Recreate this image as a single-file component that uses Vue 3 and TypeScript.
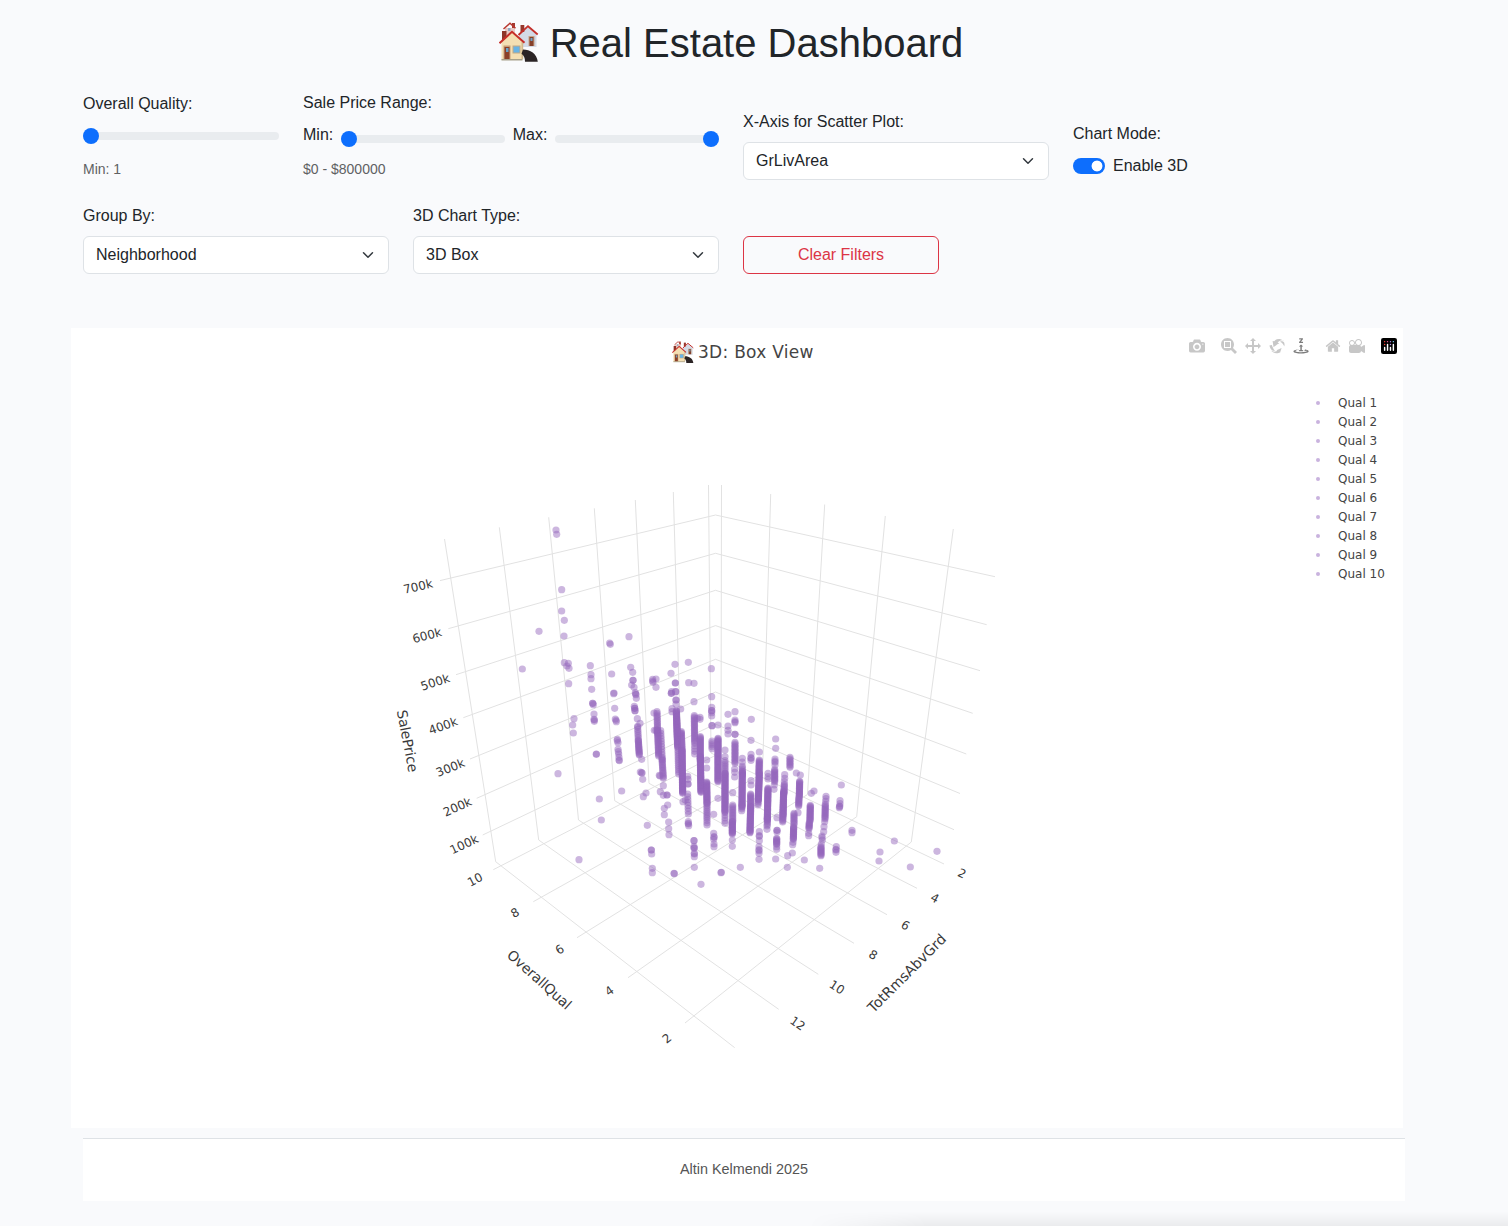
<script setup lang="ts">
import { ref, computed } from 'vue'

type Line = number[]
type Run = [number, number, number, number, number]
interface Label { t: string; x: number; y: number; r: number; w?: number; s?: number }
interface Icon { name: string; d: string; w: number; gap: boolean; active?: boolean }

const quality = ref(1)
const minPrice = ref(0)
const maxPrice = ref(800000)
const xAxis = ref('GrLivArea')
const enable3d = ref(true)
const groupBy = ref('Neighborhood')
const chartType = ref('3D Box')

function clearFilters(): void {
  quality.value = 1
  minPrice.value = 0
  maxPrice.value = 800000
}

const legend = Array.from({ length: 10 }, (_, i) => `Qual ${i + 1}`)

// Price levels: left wall, corner, right wall
const grid: Line[] = [
  [440, 580.6, 715.5, 515, 995, 576.7],
  [448.3, 628.7, 715.5, 553.3, 986.7, 624.7],
  [456, 674.7, 715.5, 590.3, 980, 670.7],
  [463.3, 717.7, 715.5, 625.6, 972.7, 713.3],
  [470, 759, 715.5, 659.3, 966.3, 754],
  [476.7, 798.3, 715.5, 692, 960, 793.5],
  [482.7, 835, 715.5, 724, 954, 829.7],
  // Rooms: left wall down, then across the floor
  [444.5, 539, 495.7, 861.7, 734.7, 1047.7],
  [499.3, 527.3, 538.7, 840, 778.7, 1009.3],
  [548.7, 517.3, 578.5, 820, 818.3, 974.3],
  [594.3, 508.3, 614.7, 800.7, 854, 943.3],
  [635.3, 500, 649, 783.3, 887, 914.7],
  [673.3, 492, 681.3, 768, 917, 888.3],
  [708.5, 485, 711, 753, 944, 864],
  // Quality: right wall down, then across the floor
  [721.5, 485, 721, 752.5, 493.3, 869.7],
  [770.7, 494, 762.5, 773.5, 533.3, 901.7],
  [824.7, 504.5, 807.5, 794.5, 577, 937.7],
  [885.3, 516, 856.7, 816.7, 628, 977.7],
  [953.3, 529, 911.3, 842, 685, 1023],
]

const labels: Label[] = [
  { t: '700k', x: 418, y: 586.3, r: -13 },
  { t: '600k', x: 427, y: 635.3, r: -15 },
  { t: '500k', x: 435, y: 682, r: -18 },
  { t: '400k', x: 443, y: 725.7, r: -20 },
  { t: '300k', x: 450.3, y: 767.5, r: -22 },
  { t: '200k', x: 457.3, y: 806.7, r: -24 },
  { t: '100k', x: 464, y: 844.3, r: -25 },
  { t: '10', x: 475, y: 879.5, r: -28 },
  { t: '8', x: 515, y: 912.5, r: -30 },
  { t: '6', x: 559.5, y: 949.2, r: -33 },
  { t: '4', x: 609.3, y: 990.7, r: -36 },
  { t: '2', x: 666.7, y: 1038.3, r: -39 },
  { t: '2', x: 962, y: 873.2, r: 26 },
  { t: '4', x: 935, y: 898, r: 28 },
  { t: '6', x: 905.5, y: 925.2, r: 30 },
  { t: '8', x: 873.3, y: 954.8, r: 31 },
  { t: '10', x: 837, y: 987, r: 33 },
  { t: '12', x: 797.7, y: 1023.3, r: 35 },
  { t: 'SalePrice', x: 407.7, y: 741, r: 79, w: 63, s: 14 },
  { t: 'OverallQual', x: 539.5, y: 979.5, r: 42, w: 81, s: 14 },
  { t: 'TotRmsAbvGrd', x: 906.7, y: 973, r: -45, w: 104, s: 14.2 },
]

// Isolated houses, three units per pixel, relative to each group's origin
const singles: { ox: number; oy: number; p: number[][] }[] = [
  { ox: 390, oy: 480, p: [
    [498, 150], [500, 163], [515, 329], [515, 393], [523, 421], [522, 468], [447, 454], [397, 567],
    [523, 548], [535, 550], [531, 558], [537, 565], [536, 611], [552, 716], [548, 735], [550, 759],
    [601, 557], [603, 584], [603, 596], [605, 628], [608, 670], [608, 670], [610, 674], [612, 702],
    [613, 720], [612, 718], [613, 724], [717, 470],
  ] },
  { ox: 390, oy: 750, p: [[619, 13], [619, 12], [504, 71], [628, 147], [634, 210], [567, 329]] },
  { ox: 600, oy: 640, p: [
    [29, 9], [31, 13], [35, 102], [42, 159], [41, 161], [44, 205], [46, 237], [49, 245], [48, 241],
    [52, 298], [54, 308], [52, 302], [54, 328], [56, 342], [55, 335], [58, 362], [57, 360], [57, 352],
    [92, 82], [98, 97], [99, 121], [99, 121], [95, 135], [102, 142], [106, 158], [108, 164], [109, 175], [107, 162],
    [104, 205], [104, 205], [105, 212], [105, 212], [103, 199], [112, 236], [120, 250], [113, 259],
    [125, 358], [125, 398], [126, 399], [121, 396], [128, 418], [138, 459], [130, 470], [65, 453], [142, 556],
    [158, 118], [159, 127], [168, 117], [158, 123], [168, 142], [162, 219], [163, 271], [168, 271], [178, 406], [180, 408],
    [190, 437], [181, 455], [190, 466], [201, 465], [201, 465], [203, 495], [193, 505], [193, 524], [206, 546], [206, 566], [207, 584],
    [154, 630], [154, 630], [155, 642], [157, 685], [157, 698], [222, 700], [223, 701],
    [225, 73], [213, 100], [226, 129], [226, 129], [214, 160], [214, 160], [215, 155], [227, 155], [227, 155], [228, 180], [228, 180], [228, 192],
    [216, 206], [216, 215], [242, 207], [265, 67], [266, 128], [282, 130], [282, 185], [241, 280],
    [249, 485], [256, 480], [263, 409], [264, 418], [264, 432], [264, 432], [265, 550], [265, 552], [266, 557], [265, 545],
    [282, 602], [282, 602], [282, 620], [282, 624], [283, 624], [283, 640], [283, 642], [283, 650], [283, 682], [303, 733],
    [292, 235], [300, 232], [300, 238], [320, 360], [320, 384], [341, 523], [341, 580], [342, 590], [342, 592], [341, 598], [342, 612], [342, 620],
    [334, 86], [335, 170], [335, 202], [335, 212], [335, 212], [335, 218], [335, 228], [336, 257], [336, 257], [354, 255],
    [354, 475], [375, 330], [375, 350], [398, 458], [397, 600], [397, 619], [384, 223], [384, 258], [384, 271], [384, 282],
    [405, 215], [405, 240], [405, 245], [405, 248], [405, 283], [405, 283], [404, 387], [404, 397], [404, 411], [363, 698],
  ] },
  { ox: 700, oy: 690, p: [
    [154, 88], [153, 151], [178, 186], [153, 193], [153, 203], [153, 205], [153, 211], [153, 272], [153, 285],
    [127, 205], [127, 216], [204, 250], [204, 260], [204, 267], [201, 408], [201, 418],
    [178, 425], [178, 437], [178, 439], [178, 452], [177, 470], [177, 479], [177, 482], [177, 490], [177, 508],
    [227, 147], [227, 175], [225, 207], [225, 213], [225, 217], [225, 225], [223, 285], [222, 298],
    [231, 383], [231, 421], [231, 421], [231, 426], [230, 470], [230, 478], [227, 507], [262, 532], [263, 497], [277, 489],
    [254, 254], [254, 265], [253, 275], [289, 249], [301, 255], [294, 368], [279, 457], [278, 464],
    [334, 310], [342, 303], [326, 430], [326, 437], [378, 319], [378, 326], [377, 334], [374, 395], [372, 410], [371, 425],
    [366, 438], [366, 443], [367, 450], [364, 462], [424, 285], [420, 332], [420, 341], [419, 348], [419, 350], [418, 353],
    [456, 421], [456, 428], [409, 470], [408, 478], [408, 480], [408, 487], [313, 510], [359, 535], [64, 547], [121, 532],
  ] },
  { ox: 690, oy: 800, p: [[613, 123], [570, 156], [567, 183], [661, 201], [741, 154]] },
]

// Crowded columns: x0, y0, x1, y1 and how many houses stand between
const runs: { ox: number; oy: number; p: Run[] }[] = [
  { ox: 600, oy: 640, p: [
    [113, 262, 115, 300, 7], [115, 302, 118, 345, 14],
    [171, 215, 173, 280, 14], [173, 270, 176, 348, 22], [182, 272, 187, 360, 12], [186, 355, 190, 415, 14],
    [229, 212, 233, 320, 50], [234, 325, 236, 402, 13], [244, 275, 246, 330, 16], [246, 330, 248, 460, 60],
    [263, 462, 265, 522, 8], [283, 227, 284, 305, 20], [284, 310, 284, 342, 5],
    [301, 290, 301, 360, 24], [301, 350, 303, 457, 48], [320, 426, 321, 490, 26], [321, 492, 321, 530, 8], [321, 535, 321, 555, 4],
    [336, 303, 336, 326, 5], [354, 295, 354, 425, 50], [375, 362, 375, 400, 8], [375, 400, 375, 518, 50], [375, 526, 375, 550, 4],
    [398, 495, 398, 545, 12], [397, 545, 397, 582, 18], [405, 307, 405, 370, 16],
  ] },
  { ox: 700, oy: 690, p: [
    [127, 228, 127, 255, 6], [127, 245, 126, 350, 40], [126, 345, 125, 362, 4],
    [152, 312, 152, 350, 12], [152, 350, 150, 428, 35], [178, 210, 177, 250, 14], [178, 250, 175, 330, 36], [175, 325, 174, 345, 5],
    [204, 294, 202, 390, 40], [202, 385, 202, 404, 5], [224, 239, 224, 275, 12], [230, 445, 230, 463, 8],
    [253, 283, 252, 310, 8], [251, 305, 249, 375, 34], [249, 375, 248, 396, 7], [270, 202, 270, 232, 8],
    [299, 274, 298, 318, 18], [297, 322, 296, 348, 9], [282, 370, 282, 403, 9], [281, 410, 280, 448, 16],
    [331, 346, 330, 393, 18], [328, 398, 327, 416, 7], [376, 343, 375, 387, 13], [363, 470, 363, 497, 10],
  ] },
]

const dots = computed<number[][]>(() => {
  const out: number[][] = []
  for (const g of runs) {
    for (const [x0, y0, x1, y1, n] of g.p) {
      for (let i = 0; i < n; i++) {
        const f = i / (n - 1)
        out.push([g.ox + (x0 + (x1 - x0) * f) / 3, g.oy + (y0 + (y1 - y0) * f) / 3])
      }
    }
  }
  for (const g of singles) for (const [x, y] of g.p) out.push([g.ox + x / 3, g.oy + y / 3])
  return out
})

const icons: Icon[] = [
  { name: 'Download plot as a png', w: 1000, gap: false, d: 'm500 450c-83 0-150-67-150-150 0-83 67-150 150-150 83 0 150 67 150 150 0 83-67 150-150 150z m400 150h-120c-16 0-34 13-39 29l-31 93c-6 15-23 28-40 28h-340c-16 0-34-13-39-28l-31-94c-6-15-23-28-40-28h-120c-55 0-100-45-100-100v-450c0-55 45-100 100-100h800c55 0 100 45 100 100v450c0 55-45 100-100 100z m-400-550c-138 0-250 112-250 250 0 138 112 250 250 250 138 0 250-112 250-250 0-138-112-250-250-250z m365 380c-19 0-35 16-35 35 0 19 16 35 35 35 19 0 35-16 35-35 0-19-16-35-35-35z' },
  { name: 'Zoom', w: 1000, gap: true, d: 'm1000-25l-250 251c40 63 63 138 63 218 0 224-182 406-407 406-224 0-406-182-406-406s183-406 407-406c80 0 155 22 218 62l250-250 125 125z m-812 250l0 438 437 0 0-438-437 0z m62 375l313 0 0-312-313 0 0 312z' },
  { name: 'Pan', w: 1000, gap: false, d: 'm1000 350l-187 188 0-125-250 0 0 250 125 0-188 187-187-187 125 0 0-250-250 0 0 125-188-188 186-187 0 125 252 0 0-250-125 0 187-188 188 188-125 0 0 250 250 0 0-126 187 188z' },
  { name: 'Orbital rotation', w: 1000, gap: false, d: 'm922 660c-5 4-9 7-14 11-359 263-580-31-580-31l-102 28 58-400c0 1 1 1 2 2 118 108 351 249 351 249s-62 27-100 42c88 83 222 183 347 122 16-8 30-17 44-27-2 1-4 2-6 4z m36-329c0 0 64 229-88 296-62 27-124 14-175-11 157-78 225-208 249-266 8-19 11-31 11-31 2 5 6 15 11 32-5-13-8-20-8-20z m-775-239c70-31 117-50 198-32-121 80-199 346-199 346l-96-15-58-12c0 0 55-226 155-287z m603 133l-317-139c0 0 4-4 19-14 7-5 24-15 24-15s-177-147-389 4c235-287 536-112 536-112l31-22 100 299-4-1z m-298-153c6-4 14-9 24-15 0 0-17 10-24 15z' },
  { name: 'Turntable rotation', w: 1000, gap: false, active: true, d: 'm833 5l-17 108v41l-130-65 130-66c0 0 0 38 0 39 0-1 36-14 39-25 4-15-6-22-16-30-15-12-39-16-56-20-90-22-187-23-279-23-261 0-341 34-353 59 3 60 228 110 228 110-140-8-351-35-351-116 0-120 293-142 474-142 155 0 477 22 477 142 0 50-74 79-163 96z m-374 94c-58-5-99-21-99-40 0-24 65-43 144-43 79 0 143 19 143 43 0 19-42 34-98 40v216h87l-132 135-133-135h88v-216z m167 515h-136v1c16 16 31 34 46 52l84 109v54h-230v-71h124v-1c-16-17-28-32-44-51l-89-114v-51h245v72z' },
  { name: 'Reset camera to default', w: 928.6, gap: true, d: 'm786 296v-267q0-15-11-26t-25-10h-214v214h-143v-214h-214q-15 0-25 10t-11 26v267q0 1 0 2t0 2l321 264 321-264q1-1 1-4z m124 39l-34-41q-5-5-12-6h-2q-7 0-12 3l-386 322-386-322q-7-4-13-4-7 2-12 7l-35 41q-4 5-3 13t6 12l401 334q18 15 42 15t43-15l136-114v109q0 8 5 13t13 5h107q8 0 13-5t5-13v-227l122-102q5-5 6-12t-4-13z' },
  { name: 'Reset camera to last save', w: 1000, gap: false, d: 'm938 413l-188-125c0 37-17 71-44 94 64 38 107 107 107 187 0 121-98 219-219 219-121 0-219-98-219-219 0-61 25-117 66-156h-115c30 33 49 76 49 125 0 103-84 187-187 187s-188-84-188-187c0-57 26-107 65-141-38-22-65-62-65-109v-250c0-70 56-126 125-126h500c69 0 125 56 125 126l188-126c34 0 62 28 62 63v375c0 35-28 63-62 63z m-750 0c-69 0-125 56-125 125s56 125 125 125 125-56 125-125-56-125-125-125z m406-1c-87 0-157 70-157 157 0 86 70 156 157 156s156-70 156-156-70-157-156-157z' },
]
</script>

<template>
  <div class="page">
    <svg width="0" height="0" class="defs" aria-hidden="true">
      <symbol id="houses" viewBox="0 0 40 40">
        <path d="M6 6h10v9H6z" fill="#e8c9c4" />
        <path d="M13 1h3v5h-3z" fill="#a33a30" />
        <path d="M4.500 7 11 1.200l5.500 5" fill="none" stroke="#b8372f" stroke-width="1.500" />
        <path d="M9 6h2.500v3H9z" fill="#8fa9c4" />
        <path d="M20 13 29 5l8.500 7.500V25H20z" fill="#d3dae6" />
        <path d="M21.500 3h3.800v7h-3.800z" fill="#96382c" />
        <path d="M19.500 13 29 4.200l9.700 8.300" fill="none" stroke="#c32f2a" stroke-width="1.800" />
        <path d="M29.500 14h6v10h-6z" fill="#c7a58a" />
        <path d="M30.500 15h4v9h-4z" fill="#85402b" />
        <path d="M31.500 16h2v3h-2z" fill="#6aa3c8" />
        <path d="M3 9h4.500v9H3z" fill="#8e3528" />
        <path d="M2.500 20 13 10l10.500 10v18H2.500z" fill="#f4dfb3" />
        <path d="M22.500 20h1.700v17h-1.700z" fill="#d3b98b" />
        <path d="M.5 21.200 13 9.800l12.500 11" fill="none" stroke="#c62e28" stroke-width="2" />
        <path d="M4.500 23.500h7V37h-7z" fill="#c69c76" />
        <path d="M5.500 25h5v12h-5z" fill="#8b4027" />
        <path d="M7 26h2.500v4H7z" fill="#6aa3c8" />
        <path d="M13.500 23.500h8v8h-8z" fill="#c3a883" />
        <path d="M14.500 24.500h6v6h-6z" fill="#68b4e6" />
        <path d="M2.500 37h21v1.500h-21z" fill="#a7a08a" />
        <path d="M24 27.500c7 0 14 4 14.800 12.300H26c0-4-1-6-3.500-8z" fill="#2b2425" />
      </symbol>
    </svg>

    <main class="container">
      <h1>
        <svg class="h-icon"><use href="#houses" /></svg>
        <span>Real Estate Dashboard</span>
      </h1>

      <section class="row first">
        <div class="col c2">
          <label>Overall Quality:</label>
          <input v-model.number="quality" class="range quality" type="range" min="1" max="10" />
          <small>Min: {{ quality }}</small>
        </div>
        <div class="col c4">
          <label>Sale Price Range:</label>
          <div class="pair">
            <span>Min:</span>
            <input v-model.number="minPrice" class="range" type="range" min="0" max="800000" />
            <span>Max:</span>
            <input v-model.number="maxPrice" class="range" type="range" min="0" max="800000" />
          </div>
          <small>${{ minPrice }} - ${{ maxPrice }}</small>
        </div>
        <div class="col c3">
          <label class="above">X-Axis for Scatter Plot:</label>
          <select v-model="xAxis"><option>GrLivArea</option></select>
        </div>
        <div class="col c3 mode">
          <label>Chart Mode:</label>
          <div class="switch">
            <input v-model="enable3d" type="checkbox" />
            <span>Enable 3D</span>
          </div>
        </div>
      </section>

      <section class="row second">
        <div class="col c3">
          <label class="above">Group By:</label>
          <select v-model="groupBy"><option>Neighborhood</option></select>
        </div>
        <div class="col c3">
          <label class="above">3D Chart Type:</label>
          <select v-model="chartType"><option>3D Box</option></select>
        </div>
        <div class="col c2">
          <button type="button" @click="clearFilters">Clear Filters</button>
        </div>
      </section>
    </main>

    <section class="chart">
      <svg class="plot" viewBox="71 328 1332 800" width="1332" height="800">
        <polyline v-for="(l, i) in grid" :key="'g' + i" :points="l.join(' ')" class="grid" />
        <circle v-for="(d, i) in dots" :key="'d' + i" :cx="d[0]" :cy="d[1]" r="3.6" class="dot" />
        <text
          v-for="(l, i) in labels"
          :key="'l' + i"
          :transform="`translate(${l.x} ${l.y}) rotate(${l.r})`"
          :font-size="l.s ?? 12"
          :textLength="l.w"
          y="0.36em"
          text-anchor="middle"
        >{{ l.t }}</text>
      </svg>
      <div class="chart-title">
        <svg class="t-icon"><use href="#houses" /></svg>
        <span>3D: Box View</span>
      </div>
      <div class="modebar">
        <svg
          v-for="ic in icons"
          :key="ic.name"
          :viewBox="`0 0 ${ic.w} 1000`"
          :class="{ gap: ic.gap, active: ic.active }"
        ><path :d="ic.d" transform="matrix(1 0 0 -1 0 850)" /></svg>
        <svg class="gap logo" viewBox="0 0 132 132">
          <rect width="132" height="132" rx="18" fill="#000" />
          <circle cx="102" cy="30" r="6" fill="#7fdbff" />
          <circle cx="78" cy="30" r="6" fill="#b68fe8" />
          <circle cx="78" cy="54" r="6" fill="#b68fe8" />
          <circle cx="54" cy="30" r="6" fill="#ff5a9e" />
          <circle cx="30" cy="30" r="6" fill="#ff4136" />
          <circle cx="30" cy="54" r="6" fill="#ff4136" />
          <path d="M30 78v24M54 54v48M78 78v24M102 54v48" stroke="#fff" stroke-width="12" stroke-linecap="round" />
        </svg>
      </div>
      <ul class="legend">
        <li v-for="q in legend" :key="q"><i></i><span>{{ q }}</span></li>
      </ul>
    </section>

    <footer>Altin Kelmendi 2025</footer>
    <div class="edge"></div>
  </div>
</template>

<style>
html,
body {
  margin: 0;
  background: #f9fafc;
}
</style>

<style scoped>
.page {
  position: relative;
  box-sizing: border-box;
  width: 1508px;
  height: 1226px;
  padding: 19px 0 0 71px;
  overflow: hidden;
  background: #f9fafc;
  color: #212529;
  font: 16px/24px "Liberation Sans", Arial, sans-serif;
}
.page * {
  box-sizing: border-box;
}
.defs {
  position: absolute;
}
.container {
  width: 1320px;
  height: 309px;
}
h1 {
  display: flex;
  justify-content: center;
  gap: 11px;
  height: 48px;
  margin: 0 0 24px;
  font-size: 40px;
  font-weight: 400;
  line-height: 48px;
}
.h-icon {
  width: 40px;
  height: 40px;
  margin-top: 3px;
}
.row {
  display: flex;
  align-items: flex-end;
}
.first {
  height: 89px;
}
.second {
  height: 94px;
}
.col {
  display: flex;
  flex-direction: column;
  padding: 0 12px;
}
.c2 {
  width: 220px;
}
.c3 {
  width: 330px;
}
.c4 {
  width: 440px;
}
.above {
  margin-bottom: 8px;
}
small {
  height: 21px;
  color: #5f6163;
  font-size: 14px;
  line-height: 21px;
}
.range {
  min-width: 0;
  height: 24px;
  margin: 0;
  padding: 0;
  background: transparent;
  appearance: none;
}
.quality {
  margin: 8px 0 11px;
}
.range::-webkit-slider-runnable-track {
  height: 8px;
  border-radius: 8px;
  background: #e9ecef;
}
.range::-webkit-slider-thumb {
  width: 16px;
  height: 16px;
  margin-top: -4px;
  border: 0;
  border-radius: 50%;
  background: #0d6efd;
  appearance: none;
}
.pair {
  display: flex;
  gap: 8px;
  height: 33px;
  margin: 8px 0 3px;
}
.pair .range {
  flex: 1;
  margin-top: 4px;
}
select {
  width: 100%;
  height: 38px;
  padding: 0 36px 0 12px;
  border: 1px solid #dee2e6;
  border-radius: 6px;
  background: #fff url("data:image/svg+xml,%3csvg xmlns='http://www.w3.org/2000/svg' viewBox='0 0 16 16'%3e%3cpath fill='none' stroke='%23343a40' stroke-linecap='round' stroke-linejoin='round' stroke-width='2' d='m2 5 6 6 6-6'/%3e%3c/svg%3e") no-repeat right 14px center / 12px 12px;
  color: #212529;
  font: inherit;
  appearance: none;
}
.mode {
  padding-bottom: 2px;
}
.switch {
  display: flex;
  align-items: center;
  gap: 8px;
  margin-top: 8px;
}
.switch input {
  width: 32px;
  height: 16px;
  margin: 0;
  border-radius: 16px;
  background: radial-gradient(circle at 24px 8px, #fff 5px, #0d6efd 5.800px);
  appearance: none;
}
button {
  height: 38px;
  padding: 0;
  border: 1px solid #dc3545;
  border-radius: 6px;
  background: transparent;
  color: #dc3545;
  font: inherit;
}
.chart {
  position: relative;
  width: 1332px;
  height: 800px;
  background: #fff;
  color: #444;
  font-family: "DejaVu Sans", Verdana, sans-serif;
}
.plot {
  display: block;
}
.plot text {
  fill: #3a3a3a;
}
.grid {
  fill: none;
  stroke: #e2e2e2;
  stroke-width: 1;
}
.dot {
  fill: #9467bd;
  fill-opacity: 0.48;
}
.chart-title {
  position: absolute;
  top: 12px;
  left: 600.5px;
  display: flex;
  align-items: center;
  gap: 4.5px;
  font-size: 17px;
  letter-spacing: 0.28px;
  white-space: nowrap;
}
.t-icon {
  width: 22px;
  height: 22px;
}
.modebar {
  position: absolute;
  top: 10px;
  right: 6px;
  display: flex;
  gap: 8px;
}
.modebar svg {
  width: 16px;
  height: 16px;
  fill: rgba(68, 68, 68, 0.3);
}
.modebar .gap {
  margin-left: 8px;
}
.modebar .active {
  fill: rgba(68, 68, 68, 0.7);
}
.legend {
  position: absolute;
  top: 65px;
  left: 1245px;
  margin: 0;
  padding: 0;
  list-style: none;
  font-size: 12px;
  line-height: 19px;
}
.legend li {
  display: flex;
  align-items: center;
  gap: 18px;
  height: 19px;
}
.legend span {
  padding-top: 2px;
}
.legend i {
  width: 4px;
  height: 4px;
  border-radius: 50%;
  background: #c9b3de;
}
footer {
  width: 1322px;
  height: 63px;
  margin: 10px 0 0 12px;
  padding-top: 18px;
  border-top: 1px solid #dee2e6;
  background: #fff;
  color: #555;
  font-size: 14.4px;
  text-align: center;
}
.edge {
  position: absolute;
  right: 0;
  bottom: 0;
  width: 700px;
  height: 14px;
  background: linear-gradient(to bottom, transparent, rgba(0, 0, 0, 0.06));
  mask-image: linear-gradient(to right, transparent, #000 120px);
}
</style>
